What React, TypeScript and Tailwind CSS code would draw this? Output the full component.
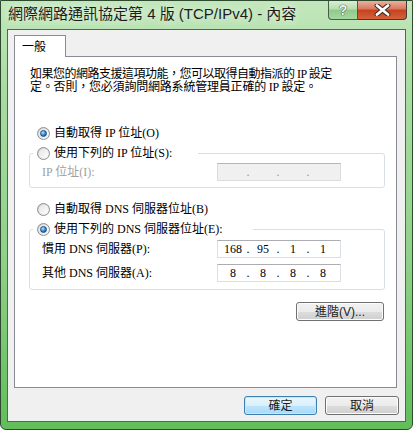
import { Fragment } from 'react'

const serif = "font-['Liberation_Serif','Noto_Sans_CJK_TC',serif]"
const sans = "font-['Liberation_Sans','Noto_Sans_CJK_TC',sans-serif]"

function Radio({ checked = false }: { checked?: boolean }) {
  return (
    <span className="flex h-[13px] w-[13px] shrink-0 items-center justify-center rounded-full border border-[#8e8f8f] bg-gradient-to-br from-[#cfcfcf] to-[#fafafa]">
      <span className="flex h-[9px] w-[9px] items-center justify-center rounded-full bg-gradient-to-br from-[#e4e4e4] to-white">
        {checked && (
          <span className="h-[7px] w-[7px] rounded-full border border-[#1b4d86] bg-[radial-gradient(circle_at_35%_30%,#b8e6ff,#2a86d6_55%,#0f4f95)]" />
        )}
      </span>
    </span>
  )
}

function IpBox({ parts, disabled = false }: { parts: string[]; disabled?: boolean }) {
  return (
    <div
      className={`flex h-[18px] w-[124px] shrink-0 items-center border pl-[2px] text-[12px] leading-[14px] ${
        disabled
          ? 'border-[#dcdcdc] border-t-[#b5b5b5] bg-[#f0f0f0] text-[#7c98b8]'
          : 'border-[#dbdfe6] border-t-[#abadb3] bg-white text-black'
      }`}
    >
      {parts.map((p, i) => (
        <Fragment key={i}>
          {i > 0 && <span className="w-[4px] text-center">.</span>}
          <span className="w-[26px] text-center">{p}</span>
        </Fragment>
      ))}
    </div>
  )
}

function Button({ label, primary = false, width }: { label: string; primary?: boolean; width: string }) {
  return (
    <button
      className={`${width} flex h-[19px] items-center justify-center rounded-[3px] border text-[12px] leading-[14px] text-[#1b1b1b] ${sans} ${
        primary
          ? 'border-[#3c7fb1] bg-[linear-gradient(#eaf6fd_0%,#d9f0fc_50%,#bee6fd_51%,#a7d9f5_100%)] shadow-[inset_0_0_0_1px_#c6e8fb]'
          : 'border-[#707070] bg-[linear-gradient(#f2f2f2_0%,#ebebeb_50%,#dddddd_51%,#cfcfcf_100%)] shadow-[inset_0_0_0_1px_#fcfcfc]'
      }`}
    >
      {label}
    </button>
  )
}

export default function App() {
  return (
    <div
      lang="zh-TW"
      className="relative flex h-[430px] w-[413px] flex-col overflow-hidden rounded-b-[6px] border border-[#2e4a2e] bg-[linear-gradient(#c2e7bc_0%,#a9dca3_20%,#8fd189_60%,#62bd5a_100%)] px-[6px] pb-[7px]"
    >
      {/* title bar */}
      <div className={`flex h-[28px] shrink-0 items-start pl-[1px] pt-[3px] text-[15px] leading-[19px] text-[#1c1c1c] [text-shadow:0_0_8px_rgba(255,255,255,0.95)] ${sans}`}>
        網際網路通訊協定第 4 版 (TCP/IPv4) - 內容
      </div>

      <div className="absolute right-[5px] top-0 flex h-[19px]">
        <div className="flex w-[30px] items-center justify-center rounded-bl-[4px] border border-t-0 border-[#4a5a4a] bg-[linear-gradient(#d8eed5_0%,#b5dfb0_45%,#8fc98a_50%,#a6d9a0_100%)] text-[14px] font-bold leading-none text-[#eef2ee] [text-shadow:0_0_1px_#333,0_0_1px_#333] font-['Liberation_Sans',sans-serif]">
          ?
        </div>
        <div className="flex w-[49px] items-center justify-center rounded-br-[4px] border border-l-0 border-t-0 border-[#4a3a33] bg-[linear-gradient(#eab19d_0%,#d9775c_45%,#c4421f_50%,#d8603c_100%)]">
          <svg width="17" height="12" viewBox="0 0 17 12">
            <path d="M3 1.5 L14 10.5 M14 1.5 L3 10.5" stroke="#3b2b25" strokeWidth="4.8" strokeLinecap="round" />
            <path d="M3 1.5 L14 10.5 M14 1.5 L3 10.5" stroke="#ffffff" strokeWidth="2.8" strokeLinecap="round" />
          </svg>
        </div>
      </div>

      {/* client area */}
      <div className={`flex flex-1 flex-col border border-[#4d6a4d] bg-[#f0f0f0] ${serif} text-[12px] text-black`}>
        <div className="ml-[6px] mt-[5px] flex">
          <div className={`relative z-10 -mb-px flex h-[22px] w-[52px] items-center border border-b-0 border-[#898c95] bg-white pl-[7px] text-[12px] ${sans}`}>
            一般
          </div>
        </div>

        <div className="ml-[6px] mr-[8px] flex h-[332px] flex-col border border-[#898c95] bg-white">
          <p className="ml-[15px] mt-[11px] leading-[13px]">
            <span className="tracking-[-0.5px]">如果您的網路支援這項功能，您可以取得自動指派的 IP 設定</span>
            <br />
            <span className="tracking-[-0.2px]">定。否則，您必須詢問網路系統管理員正確的 IP 設定。</span>
          </p>

          <div className="ml-[22px] mt-[32px] flex h-[14px] items-center gap-[4px] leading-[14px]">
            <Radio checked />
            <span>自動取得 IP 位址(O)</span>
          </div>

          <fieldset className="ml-[14px] mr-[11px] mt-[6px] rounded-[3px] border border-[#d5dfe5] pb-[6px]">
            <legend className="ml-[3px] pl-[4px] pr-[26px]">
              <span className="flex h-[14px] items-center gap-[4px] leading-[14px]">
                <Radio />
                <span>使用下列的 IP 位址(S):</span>
              </span>
            </legend>
            <div className="mt-[3px] flex h-[18px] items-center">
              <span className="w-[187px] pl-[12px] leading-[14px] text-[#a0a0a0]">IP 位址(I):</span>
              <IpBox parts={['', '', '', '']} disabled />
            </div>
          </fieldset>

          <div className="ml-[22px] mt-[14px] flex h-[14px] items-center gap-[4px] leading-[14px]">
            <Radio />
            <span>自動取得 DNS 伺服器位址(B)</span>
          </div>

          <fieldset className="ml-[14px] mr-[11px] mt-[6px] rounded-[3px] border border-[#d5dfe5] pb-[7px]">
            <legend className="ml-[3px] pl-[4px] pr-[30px]">
              <span className="flex h-[14px] items-center gap-[4px] leading-[14px]">
                <Radio checked />
                <span>使用下列的 DNS 伺服器位址(E):</span>
              </span>
            </legend>
            <div className="mt-[4px] flex h-[18px] items-center">
              <span className="w-[187px] pl-[12px] leading-[14px]">慣用 DNS 伺服器(P):</span>
              <IpBox parts={['168', '95', '1', '1']} />
            </div>
            <div className="mt-[6px] flex h-[18px] items-center">
              <span className="w-[187px] pl-[12px] leading-[14px]">其他 DNS 伺服器(A):</span>
              <IpBox parts={['8', '8', '8', '8']} />
            </div>
          </fieldset>

          <div className="mr-[12px] mt-[12px] flex justify-end">
            <Button label="進階(V)..." width="w-[88px]" />
          </div>
        </div>

        <div className="mr-[6px] mt-[8px] flex justify-end gap-[8px]">
          <Button label="確定" primary width="w-[73px]" />
          <Button label="取消" width="w-[74px]" />
        </div>
      </div>
    </div>
  )
}
